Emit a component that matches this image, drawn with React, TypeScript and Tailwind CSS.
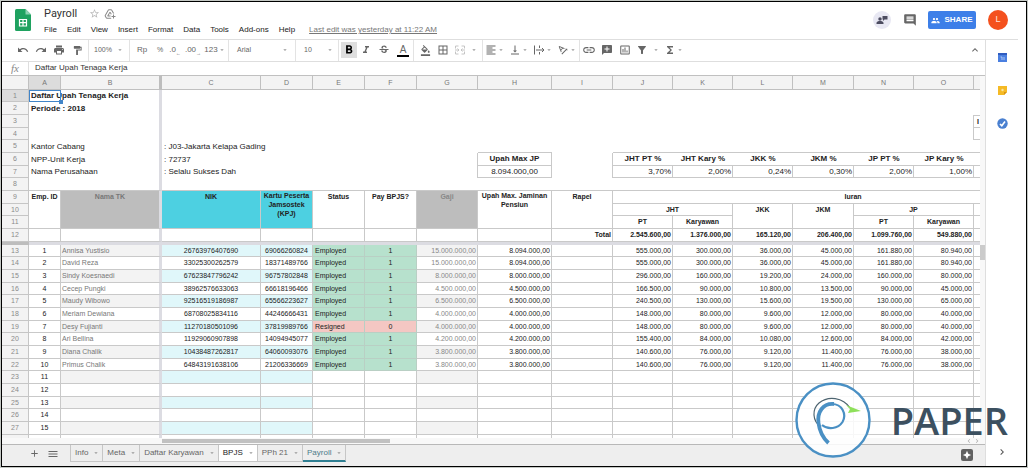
import React, { ReactNode, useState } from "react";
import {
  MdAdd,
  MdAddComment,
  MdAddToDrive,
  MdArrowDropDown,
  MdBorderAll,
  MdChevronRight,
  MdComment,
  MdFilterAlt,
  MdFormatAlignLeft,
  MdFormatBold,
  MdFormatColorFill,
  MdFormatItalic,
  MdFormatPaint,
  MdFunctions,
  MdInsertChartOutlined,
  MdInsertLink,
  MdKeyboardArrowUp,
  MdMenu,
  MdPeople,
  MdPrint,
  MdRedo,
  MdStarBorder,
  MdStrikethroughS,
  MdTextRotationAngleup,
  MdUndo,
  MdVerticalAlignBottom,
} from "react-icons/md";

interface IEmployee {
  name: string;
  nik: string;
  kpj: string;
  active: boolean;
  gaji: string;
  upah: string;
  iuran: string[];
}

const employees: IEmployee[] = [
  { name: "Annisa Yustisio", nik: "26763976407690", kpj: "69066260824", active: true, gaji: "15.000.000,00", upah: "8.094.000,00", iuran: ["555.000,00", "300.000,00", "36.000,00", "45.000,00", "161.880,00", "80.940,00"] },
  { name: "David Reza", nik: "33025300262579", kpj: "18371489766", active: true, gaji: "15.000.000,00", upah: "8.094.000,00", iuran: ["555.000,00", "300.000,00", "36.000,00", "45.000,00", "161.880,00", "80.940,00"] },
  { name: "Sindy Koesnaedi", nik: "67623847796242", kpj: "96757802848", active: true, gaji: "8.000.000,00", upah: "8.000.000,00", iuran: ["296.000,00", "160.000,00", "19.200,00", "24.000,00", "160.000,00", "80.000,00"] },
  { name: "Cecep Pungki", nik: "38962576633063", kpj: "66618196466", active: true, gaji: "4.500.000,00", upah: "4.500.000,00", iuran: ["166.500,00", "90.000,00", "10.800,00", "13.500,00", "90.000,00", "45.000,00"] },
  { name: "Maudy Wibowo", nik: "92516519186987", kpj: "65566223627", active: true, gaji: "6.500.000,00", upah: "6.500.000,00", iuran: ["240.500,00", "130.000,00", "15.600,00", "19.500,00", "130.000,00", "65.000,00"] },
  { name: "Meriam Dewiana", nik: "68708025834116", kpj: "44246666431", active: true, gaji: "4.000.000,00", upah: "4.000.000,00", iuran: ["148.000,00", "80.000,00", "9.600,00", "12.000,00", "80.000,00", "40.000,00"] },
  { name: "Desy Fujianti", nik: "11270180501096", kpj: "37819989766", active: false, gaji: "4.000.000,00", upah: "4.000.000,00", iuran: ["148.000,00", "80.000,00", "9.600,00", "12.000,00", "80.000,00", "40.000,00"] },
  { name: "Ari Bellina", nik: "11929060907898", kpj: "14094945077", active: true, gaji: "4.200.000,00", upah: "4.200.000,00", iuran: ["155.400,00", "84.000,00", "10.080,00", "12.600,00", "84.000,00", "42.000,00"] },
  { name: "Diana Chalik", nik: "10438487262817", kpj: "64060093076", active: true, gaji: "3.800.000,00", upah: "3.800.000,00", iuran: ["140.600,00", "76.000,00", "9.120,00", "11.400,00", "76.000,00", "38.000,00"] },
  { name: "Primus Chalik", nik: "64843191638106", kpj: "21206336669", active: true, gaji: "3.800.000,00", upah: "3.800.000,00", iuran: ["140.600,00", "76.000,00", "9.120,00", "11.400,00", "76.000,00", "38.000,00"] },
];

const columns = [
  { name: "A", width: "w-8" },
  { name: "B", width: "w-[101px]" },
  { name: "C", width: "w-[99px]" },
  { name: "D", width: "w-[52px]" },
  { name: "E", width: "w-[52px]" },
  { name: "F", width: "w-[52px]" },
  { name: "G", width: "w-[61px]" },
  { name: "H", width: "w-[74px]" },
  { name: "I", width: "w-[61px]" },
  { name: "J", width: "w-[60px]" },
  { name: "K", width: "w-[60px]" },
  { name: "L", width: "w-[60px]" },
  { name: "M", width: "w-[61px]" },
  { name: "N", width: "w-[60px]" },
  { name: "O", width: "w-[60px]" },
  { name: "", width: "w-[60px]" },
  { name: "", width: "w-[60px]" },
];

const menus = ["File", "Edit", "View", "Insert", "Format", "Data", "Tools", "Add-ons", "Help"];
const tabs = ["Info", "Meta", "Daftar Karyawan", "BPJS", "PPh 21", "Payroll"];
const rates = [
  ["JHT PT %", "3,70%"],
  ["JHT Kary %", "2,00%"],
  ["JKK %", "0,24%"],
  ["JKM %", "0,30%"],
  ["JP PT %", "2,00%"],
  ["JP Kary %", "1,00%"],
];
const totals = ["2.545.600,00", "1.376.000,00", "165.120,00", "206.400,00", "1.099.760,00", "549.880,00"];

const line = "border-r border-b border-[#c9c9c9]";
const frozen = "border-r-[3px] border-r-[#dcdce2]";

const Row = ({ n, children }: { n: number; children?: ReactNode }) => (
  <tr className={n % 3 === 1 ? "h-3" : "h-[13px]"}>
    <th
      scope="row"
      className={`border-r border-b border-[#c6c6c6] font-normal text-[#8a8a8a] ${
        n === 1 ? "bg-[#dcdcdc]" : "bg-[#f3f3f3]"
      }`}
    >
      {n}
    </th>
    {children}
  </tr>
);

const Blank = ({ span, className = "" }: { span?: number; className?: string }) => (
  <td colSpan={span} className={className}></td>
);

const Tool = ({
  label,
  className = "w-[18px]",
  children,
}: {
  label: string;
  className?: string;
  children: ReactNode;
}) => (
  <button
    type="button"
    aria-label={label}
    className={`flex h-4 shrink-0 items-center justify-center ${className}`}
  >
    {children}
  </button>
);

const Caret = () => <MdArrowDropDown className="size-2 shrink-0 text-[#999]" />;
const Divider = () => <span className="h-full w-px shrink-0 bg-[#e3e3e3]" />;

const Toolbar = () => (
  <div className="flex h-[22px] items-center overflow-hidden border-b border-[#dedede] pl-3 text-[7px] text-[#666]">
    <Tool label="Undo"><MdUndo className="size-3" /></Tool>
    <Tool label="Redo"><MdRedo className="size-3" /></Tool>
    <Tool label="Print"><MdPrint className="size-3" /></Tool>
    <Tool label="Paint format"><MdFormatPaint className="size-[11px]" /></Tool>
    <span className="w-0.5" />
    <Divider />
    <Tool label="Zoom" className="w-10 gap-1">100%<Caret /></Tool>
    <Divider />
    <Tool label="Format as currency" className="w-6 text-[8px]">Rp</Tool>
    <Tool label="Format as percent" className="w-3">%</Tool>
    <Tool label="Decrease decimal places">
      <span className="flex items-end text-[8px]">.0<span className="text-[5px] leading-[5px]">←</span></span>
    </Tool>
    <Tool label="Increase decimal places">
      <span className="flex items-end text-[8px]">.00<span className="text-[5px] leading-[5px]">→</span></span>
    </Tool>
    <Tool label="More formats" className="w-[26px] text-[8px]">123<Caret /></Tool>
    <Divider />
    <Tool label="Font" className="w-[66px] pr-1.5 pl-2">
      <span className="grow text-left">Arial</span>
      <Caret />
    </Tool>
    <Divider />
    <Tool label="Font size" className="w-[42px] pr-1 pl-2">
      <span className="grow text-left">10</span>
      <Caret />
    </Tool>
    <Divider />
    <span className="w-0.5" />
    <Tool label="Bold" className="w-4 bg-[#dedede] text-black"><MdFormatBold className="size-3.5" /></Tool>
    <Tool label="Italic"><MdFormatItalic className="size-3" /></Tool>
    <Tool label="Strikethrough"><MdStrikethroughS className="size-3" /></Tool>
    <Tool label="Text color" className="w-5">
      <span className="border-b-2 border-black px-[3px] text-[10px] leading-[11px]">A</span>
    </Tool>
    <Divider />
    <span className="w-0.5" />
    <Tool label="Fill color"><MdFormatColorFill className="size-[11px]" /></Tool>
    <Tool label="Borders"><MdBorderAll className="size-3" /></Tool>
    <Tool label="Merge cells" className="w-7 gap-1 text-[#c4c4c4]">
      <svg viewBox="0 0 24 24" className="size-3" fill="none" stroke="currentColor" strokeWidth="2">
        <path d="M9 4H3v5M15 4h6v5M9 20H3v-5M15 20h6v-5M2 12h7M22 12h-7M7 9l3 3-3 3M17 9l-3 3 3 3" />
      </svg>
      <Caret />
    </Tool>
    <span className="w-0.5" />
    <Divider />
    <Tool label="Horizontal align" className="w-6"><MdFormatAlignLeft className="size-3" /><Caret /></Tool>
    <Tool label="Vertical align" className="w-6"><MdVerticalAlignBottom className="size-3" /><Caret /></Tool>
    <Tool label="Text wrapping" className="w-6">
      <svg viewBox="0 0 24 24" className="size-3" fill="none" stroke="currentColor" strokeWidth="2">
        <path d="M3 3v18M13 3v5M13 16v5M6 12h16M18 8l4 4-4 4" />
      </svg>
      <Caret />
    </Tool>
    <Tool label="Text rotation" className="w-6"><MdTextRotationAngleup className="size-3" /><Caret /></Tool>
    <Divider />
    <Tool label="Insert link"><MdInsertLink className="size-3.5" /></Tool>
    <Tool label="Insert comment"><MdAddComment className="size-3 -scale-x-100" /></Tool>
    <Tool label="Insert chart"><MdInsertChartOutlined className="size-3" /></Tool>
    <Tool label="Filter" className="w-7 gap-1"><MdFilterAlt className="size-3" /><Caret /></Tool>
    <Tool label="Functions" className="w-6"><MdFunctions className="size-3" /><Caret /></Tool>
    <span className="grow" />
    <Tool label="Hide the menus" className="mr-px w-[18px]"><MdKeyboardArrowUp className="size-3" /></Tool>
  </div>
);

const Header = () => (
  <header className="flex h-[37px] shrink-0 items-start pl-[13px]">
    <svg viewBox="0 0 16 22" className="mt-[7px] h-[22px] w-4 shrink-0">
      <path d="M1.500 0H10.500L16 5.500V20.500Q16 22 14.500 22H1.500Q0 22 0 20.500V1.500Q0 0 1.500 0Z" fill="#1fa260" />
      <path d="M10.500 0L16 5.500H10.500Z" fill="#8ed1b1" />
      <path d="M4.500 10.500h7v6.500h-7zM4.500 13.700h7M8 10.500v6.500" fill="none" stroke="#fff" strokeWidth="1.200" />
    </svg>
    <div className="min-w-0 grow pl-[13px]">
      <div className="mt-1 flex h-[15px] items-center text-[#888]">
        <h1 className="font-['Roboto',sans-serif] text-[11px] leading-[15px] text-[#333]">Payroll</h1>
        <button type="button" aria-label="Star" className="ml-3 text-[#bbb]"><MdStarBorder className="size-[11px]" /></button>
        <button type="button" aria-label="Add to Drive" className="ml-1"><MdAddToDrive className="size-3" /></button>
      </div>
      <nav className="mt-[3px] flex h-3 items-center gap-2.5 text-[8px] leading-3 whitespace-nowrap text-[#222]">
        {menus.map((menu) => (
          <button key={menu} type="button">{menu}</button>
        ))}
        <a href="#history" className="ml-1 text-[#777] underline">Last edit was yesterday at 11:22 AM</a>
      </nav>
    </div>
    <div className="mt-2 flex shrink-0 items-center pr-[18px]">
      <button type="button" aria-label="Activity" className="flex size-[18px] items-center justify-center rounded-full bg-[#e8e8f3] text-[#4c4c60]">
        <svg viewBox="0 0 24 24" className="size-3" fill="currentColor">
          <circle cx="8" cy="10" r="3.500" />
          <path d="M1 20v-2c0-3 4-4 7-4s7 1 7 4v2zM13 4h10v7h-6l-3 3v-3h-1z" />
        </svg>
      </button>
      <button type="button" aria-label="Comments" className="ml-3 text-[#666]"><MdComment className="size-3.5" /></button>
      <button type="button" className="ml-[11px] flex h-[18px] w-12 items-center justify-center gap-1 rounded-xs bg-[#3d7fe8] text-[8px] font-bold text-white">
        <MdPeople className="size-[9px]" />
        SHARE
      </button>
      <button type="button" aria-label="Account" className="ml-3 flex size-5 items-center justify-center rounded-full bg-[#f4511e] text-[9px] text-[#ffe3da]">L</button>
    </div>
  </header>
);

const Sheet = () => (
  <table className="w-[1092px] table-fixed border-separate border-spacing-0 text-[7px] leading-[11px] whitespace-nowrap text-[#222]">
    <colgroup>
      <col className="w-[27px]" />
      {columns.map((col, idx) => (
        <col key={idx} className={col.width} />
      ))}
    </colgroup>
    <thead>
      <tr className="h-[15px] bg-[#f3f3f3] text-[#777]">
        <td className="border-y border-r border-[#c0c0c0]"></td>
        {columns.map((col, idx) => (
          <th
            key={idx}
            scope="col"
            className={`border-y border-r border-[#c0c0c0] font-normal ${
              col.name === "A" ? "bg-[#dcdcdc]" : ""
            } ${col.name === "B" ? "border-r-[3px] border-r-[#bdbdbd]" : ""}`}
          >
            {col.name}
          </th>
        ))}
      </tr>
    </thead>
    <tbody>
      <Row n={1}>
        <td className="relative pl-0.5 text-[8px] font-bold">
          Daftar Upah Tenaga Kerja
          <span className="absolute inset-0 border border-[#4285c8]" />
          <span className="absolute -right-0.5 -bottom-0.5 size-1 bg-[#4285c8]" />
        </td>
        <Blank className={frozen} />
        <Blank span={15} />
      </Row>
      <Row n={2}>
        <td className="pl-0.5 text-[8px] font-bold">Periode : 2018</td>
        <Blank className={frozen} />
        <Blank span={15} />
      </Row>
      <Row n={3}>
        <Blank />
        <Blank className={frozen} />
        <Blank span={13} className="border-r border-[#c9c9c9]" />
        <td className="border-y border-[#c9c9c9] pl-[3px] font-bold">I</td>
      </Row>
      <Row n={4}>
        <Blank />
        <Blank className={frozen} />
        <Blank span={13} className="border-r border-[#c9c9c9]" />
        <Blank className="border-b border-[#c9c9c9]" />
      </Row>
      <Row n={5}>
        <td className="pl-0.5 text-[8px]">Kantor Cabang</td>
        <Blank className={frozen} />
        <td className="pl-0.5 text-[8px]">: J03-Jakarta Kelapa Gading</td>
        <Blank span={4} />
        <Blank className="border-b border-[#c9c9c9]" />
        <Blank />
        <Blank span={8} className="border-b border-[#c9c9c9]" />
      </Row>
      <Row n={6}>
        <td className="pl-0.5 text-[8px]">NPP-Unit Kerja</td>
        <Blank className={frozen} />
        <td className="pl-0.5 text-[8px]">: 72737</td>
        <Blank span={3} />
        <Blank className="border-r border-[#c9c9c9]" />
        <td className={`${line} text-center text-[8px] font-bold`}>Upah Max JP</td>
        <Blank className="border-r border-[#c9c9c9]" />
        {rates.map(([name]) => (
          <td key={name} className="border-b border-[#c9c9c9] text-center text-[8px] font-bold">{name}</td>
        ))}
        <Blank span={2} className="border-b border-[#c9c9c9]" />
      </Row>
      <Row n={7}>
        <td className="pl-0.5 text-[8px]">Nama Perusahaan</td>
        <Blank className={frozen} />
        <td className="pl-0.5 text-[8px]">: Selalu Sukses Dah</td>
        <Blank span={3} />
        <Blank className="border-r border-[#c9c9c9]" />
        <td className={`${line} text-center text-[8px]`}>8.094.000,00</td>
        <Blank className="border-r border-[#c9c9c9]" />
        {rates.map(([name, value]) => (
          <td key={name} className={`${line} pr-px text-right text-[8px]`}>{value}</td>
        ))}
        <Blank span={2} className="border-b border-[#c9c9c9]" />
      </Row>
      <Row n={8}>
        <Blank className="border-b border-[#c9c9c9]" />
        <Blank className={`border-b border-b-[#c9c9c9] ${frozen}`} />
        <Blank span={15} className="border-b border-[#c9c9c9]" />
      </Row>
      <Row n={9}>
        <td rowSpan={3} className={`${line} text-center align-top font-bold`}>Emp. ID</td>
        <td rowSpan={3} className={`border-b border-b-[#c9c9c9] ${frozen} bg-[#bdbdbd] text-center align-top font-bold text-[#777]`}>Nama TK</td>
        <td rowSpan={3} className={`${line} bg-[#4dd0e1] text-center align-top font-bold`}>NIK</td>
        <td rowSpan={3} className={`${line} bg-[#4dd0e1] text-center align-top leading-[9px] font-bold whitespace-normal`}>
          Kartu Peserta Jamsostek (KPJ)
        </td>
        <td rowSpan={3} className={`${line} text-center align-top font-bold`}>Status</td>
        <td rowSpan={3} className={`${line} text-center align-top font-bold`}>Pay BPJS?</td>
        <td rowSpan={3} className={`${line} bg-[#bdbdbd] text-center align-top font-bold text-[#888]`}>Gaji</td>
        <td rowSpan={3} className={`${line} text-center align-top leading-[9px] font-bold whitespace-normal`}>Upah Max. Jaminan Pensiun</td>
        <td rowSpan={3} className={`${line} text-center align-top font-bold`}>Rapel</td>
        <td colSpan={8} className={`${line} text-center font-bold`}>Iuran</td>
      </Row>
      <Row n={10}>
        <td colSpan={2} className={`${line} text-center font-bold`}>JHT</td>
        <td rowSpan={2} className={`${line} text-center align-top font-bold`}>JKK</td>
        <td rowSpan={2} className={`${line} text-center align-top font-bold`}>JKM</td>
        <td colSpan={2} className={`${line} text-center font-bold`}>JP</td>
        <Blank span={2} className={line} />
      </Row>
      <Row n={11}>
        {["PT", "Karyawan", "PT", "Karyawan"].map((text, idx) => (
          <td key={idx} className={`${line} text-center font-bold`}>{text}</td>
        ))}
        <Blank span={2} className={line} />
      </Row>
      <Row n={12}>
        <Blank className={line} />
        <Blank className={`border-b border-b-[#c9c9c9] ${frozen}`} />
        {columns.slice(2, 8).map((col) => (
          <Blank key={col.name} className={line} />
        ))}
        <td className={`${line} pr-px text-right font-bold`}>Total</td>
        {totals.map((total) => (
          <td key={total} className={`${line} pr-px text-right font-bold`}>{total}</td>
        ))}
        <Blank span={2} className={line} />
      </Row>
      <tr className="h-[3px]">
        <td className="bg-[#bdbdbd]"></td>
        <td colSpan={17} className="bg-[#dcdce2]"></td>
      </tr>
      {Array.from({ length: 16 }, (_, idx) => {
        const item = employees[idx];
        const odd = idx % 2 === 0;
        const gray = odd ? "bg-[#f3f3f3]" : "";
        const cyan = odd ? "bg-[#e0f7fa]" : "";
        const status = item ? (item.active ? "bg-[#b7e1cd]" : "bg-[#f4c7c3]") : "";
        const statusLine = item ? "border-r border-b border-[#b9cfc4]" : line;
        return (
          <Row key={idx} n={idx + 13}>
            <td className={`${line} text-center`}>{idx + 1}</td>
            <td className={`border-b border-b-[#c9c9c9] ${frozen} ${gray} pl-px text-[#777]`}>{item?.name}</td>
            <td className={`${line} ${cyan} text-center`}>{item?.nik}</td>
            <td className={`${line} ${cyan} text-center`}>{item?.kpj}</td>
            <td className={`${statusLine} ${status} pl-0.5`}>{item && (item.active ? "Employed" : "Resigned")}</td>
            <td className={`${statusLine} ${status} text-center`}>{item && (item.active ? 1 : 0)}</td>
            <td className={`${line} ${gray} pr-px text-right text-[#888]`}>{item?.gaji}</td>
            <td className={`${line} pr-px text-right`}>{item?.upah}</td>
            <Blank className={line} />
            {columns.slice(9, 15).map((col, i) => (
              <td key={col.name} className={`${line} pr-px text-right`}>{item?.iuran[i]}</td>
            ))}
            <Blank className={line} />
            <Blank className={line} />
          </Row>
        );
      })}
    </tbody>
  </table>
);

const Brand = () => (
  <div className="pointer-events-none absolute right-[18px] bottom-2 flex items-center gap-5">
    <svg viewBox="0 0 76 76" className="size-[76px]" fill="none">
      <circle cx="38" cy="38" r="36.500" fill="#fff" fillOpacity="0.850" stroke="#4a90c4" strokeWidth="2.400" />
      <path d="M26 45C17 39 17 27 24 21C33 13.500 48 15 55 26" stroke="#4d6470" strokeWidth="1.200" />
      <path d="M51 23L66 29L53 31L55 27Z" fill="#8ee05a" />
      <path d="M27 43C33 48 43 47 47.500 40C52 32 47 22 37 22" stroke="#4a90c4" strokeWidth="2.200" />
      <path d="M39 22C28 21 22 30 23.500 41C24.500 49 28 56 33.500 61" stroke="#4a90c4" strokeWidth="3.800" />
    </svg>
    <span className="font-['Open_Sans',sans-serif] text-[38px] leading-[38px] font-semibold text-[#3c5060]">PAPER</span>
  </div>
);

const App = () => {
  const [formula, setFormula] = useState("Daftar Upah Tenaga Kerja");
  const [tab, setTab] = useState("BPJS");

  return (
    <div className="h-screen border border-[#c4c8c4] bg-white font-['Liberation_Sans',sans-serif]">
      <div className="relative flex h-full flex-col overflow-hidden border border-black">
        <Header />
        <div className="mr-2 h-px shrink-0 bg-[#dedede]" />
        <div className="flex min-h-0 grow">
          <main className="flex min-w-0 grow flex-col">
            <Toolbar />
            <label className="flex h-[13px] shrink-0 items-center">
              <span className="w-[26px] text-center font-['Liberation_Serif',serif] text-[11px] leading-3 text-[#888] italic">fx</span>
              <span className="h-full w-px bg-[#dedede]" />
              <input
                aria-label="Formula"
                className="h-3 grow pl-1.5 text-[8px] text-[#333] outline-none"
                value={formula}
                onChange={(e) => setFormula(e.target.value)}
              />
            </label>
            <div className="flex min-h-0 grow">
              <div className="min-w-0 grow overflow-hidden">
                <Sheet />
              </div>
              <div className="flex w-[5px] shrink-0 flex-col border-t border-[#c0c0c0] bg-[#f8f8f8]">
                <span className="mt-[169px] h-[15px] bg-[#cbcbcb]" />
              </div>
            </div>
            <div className="flex h-1.5 shrink-0 items-center bg-[#f8f8f8] pl-40">
              <span className="h-1 w-[228px] bg-[#c1c1c1]" />
              <span className="grow" />
              <MdChevronRight className="size-2 rotate-180 text-[#aaa]" />
              <MdChevronRight className="mr-1 size-2 text-[#aaa]" />
            </div>
            <footer className="flex h-[22px] shrink-0 items-start border-t border-[#b8b8b8] bg-[#eee] pl-6 text-[8px] text-[#666]">
              <button type="button" aria-label="Add sheet" className="mt-[3px] w-4"><MdAdd className="mx-auto size-[11px]" /></button>
              <button type="button" aria-label="All sheets" className="mt-[3px] mr-2 ml-0.5 w-[18px]"><MdMenu className="mx-auto size-3" /></button>
              <div className="flex border-l border-[#c6c6c6]">
                {tabs.map((name) => (
                  <button
                    key={name}
                    type="button"
                    onClick={() => setTab(name)}
                    className={`flex h-[17px] shrink-0 items-center gap-1 border-r border-b border-[#c6c6c6] pr-0.5 pl-1 ${
                      tab === name ? "bg-white text-[#222]" : ""
                    } ${name === "Payroll" ? "border-b-2 border-b-[#2f7f92] text-[#4d7c8a]" : ""}`}
                  >
                    {name}
                    <Caret />
                  </button>
                ))}
              </div>
              <span className="grow" />
              <button type="button" aria-label="Explore" className="mt-1 mr-3 flex size-3 items-center justify-center rounded-xs bg-[#616161] text-white">
                <svg viewBox="0 0 12 12" className="size-2.5" fill="currentColor">
                  <path d="M6 1L7.500 4.500L11 6L7.500 7.500L6 11L4.500 7.500L1 6L4.500 4.500Z" />
                </svg>
              </button>
            </footer>
          </main>
          <aside className="flex w-[41px] shrink-0 flex-col items-center gap-[22px] border-l border-[#dedede] pt-3 pr-2">
            <button type="button" aria-label="Calendar">
              <svg viewBox="0 0 11 11" className="size-[11px]">
                <path d="M1 1h9v9H1z" fill="#4a7fe0" />
                <path d="M1 1h9v2H1z" fill="#2f5cc0" />
                <path d="M3.500 5h1.500v3M7 5v3" fill="none" stroke="#c8d8f8" strokeWidth="0.800" />
              </svg>
            </button>
            <button type="button" aria-label="Keep">
              <svg viewBox="0 0 11 11" className="size-[11px]">
                <path d="M1 1h9v6L7 10H1z" fill="#f5ba25" />
                <path d="M10 7L7 10V7z" fill="#d99412" />
                <circle cx="5.500" cy="5" r="1.200" fill="#fbe3a0" />
              </svg>
            </button>
            <button type="button" aria-label="Tasks">
              <svg viewBox="0 0 11 11" className="size-[11px]">
                <circle cx="5.500" cy="5.500" r="5.200" fill="#4a80d0" />
                <path d="M3 6L4.800 7.700L8 3.500" fill="none" stroke="#fff" strokeWidth="1.600" />
              </svg>
            </button>
            <button type="button" aria-label="Show side panel" className="mt-auto mb-2 text-[#555]">
              <MdChevronRight className="size-3" />
            </button>
          </aside>
        </div>
        <Brand />
      </div>
    </div>
  );
};

export default App;
